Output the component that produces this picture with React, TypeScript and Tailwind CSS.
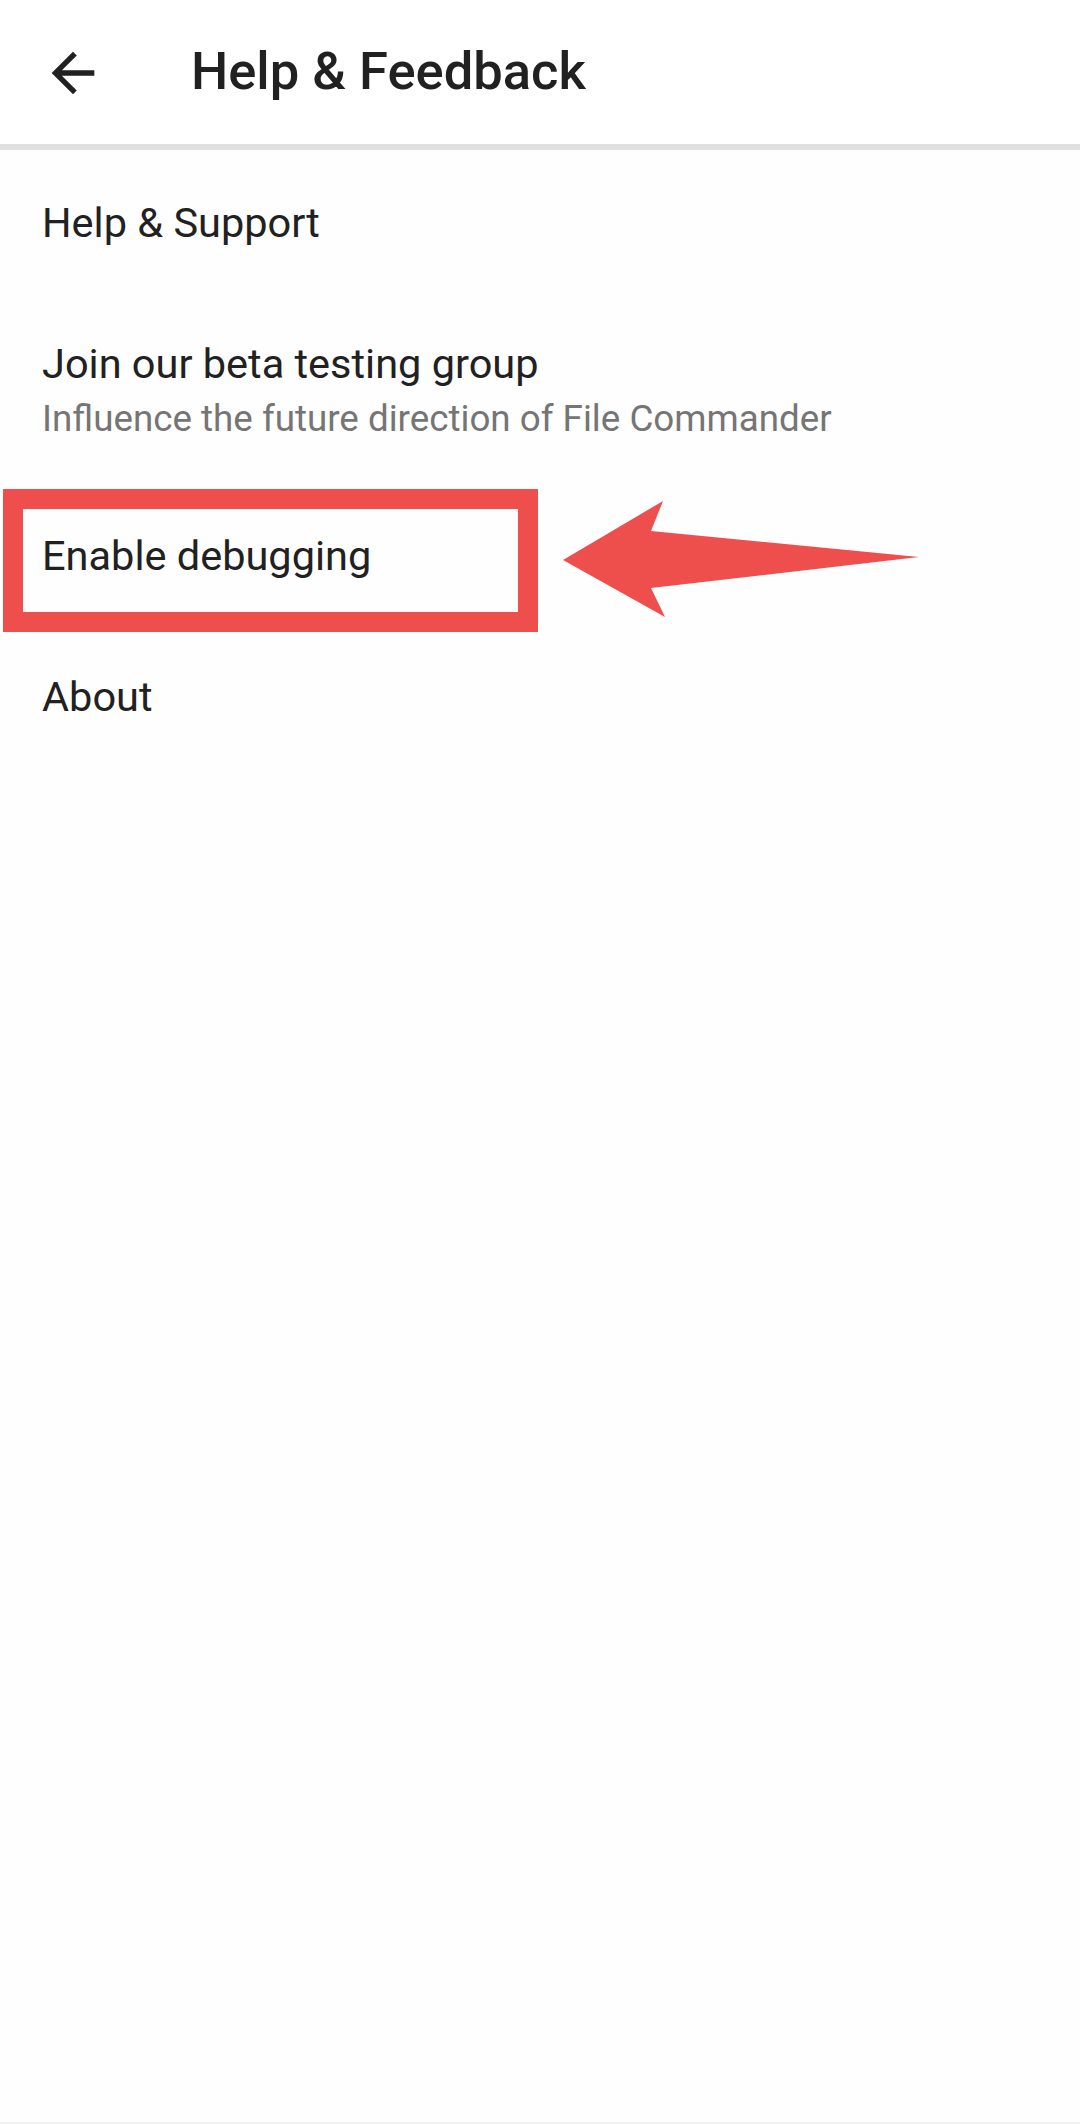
import React from "react";

const font = { fontFamily: "Roboto, 'Noto Sans', sans-serif" };

function BackIcon() {
  return (
    <svg viewBox="0 0 24 24" className="w-[64px] h-[64px]" fill="#212121">
      <path d="M20 11H7.83l5.59-5.59L12 4l-8 8 8 8 1.41-1.41L7.83 13H20v-2z" />
    </svg>
  );
}

interface RowProps {
  title: string;
  subtitle?: string;
}

function Row({ title, subtitle }: RowProps) {
  return (
    <div className="pl-[42px] pr-[42px] pt-[48px] pb-[37px]">
      <div className="text-[41.5px] leading-[56px] text-[#212121]">{title}</div>
      {subtitle && (
        <div className="mt-[3px] text-[36.75px] leading-[48px] text-[#757575]">{subtitle}</div>
      )}
    </div>
  );
}

export default function App() {
  return (
    <div className="relative w-[1080px] h-[2124px] bg-[#fefefe] overflow-hidden" style={font}>
      {/* Toolbar */}
      <div className="h-[144px] bg-white flex items-center">
        <div className="ml-[41px] mt-[1px]">
          <BackIcon />
        </div>
        <div className="ml-[86px] text-[52.5px] font-medium text-[#212121] leading-none mb-[1px]">
          Help &amp; Feedback
        </div>
      </div>
      <div className="h-[6px] bg-[#e0e0e0]" />

      {/* List */}
      <div className="-mt-[3px]">
        <Row title="Help & Support" />
        <Row title="Join our beta testing group" subtitle="Influence the future direction of File Commander" />
        <Row title="Enable debugging" />
        <Row title="About" />
      </div>

      {/* Annotation box */}
      <div className="absolute left-[3px] top-[489px] w-[535px] h-[143px] border-[20px] border-[#ee4f4d]" />

      {/* Annotation arrow */}
      <svg className="absolute left-0 top-0" width="1080" height="700" viewBox="0 0 1080 700">
        <polygon
          points="563,560 663,501 651,531 919,557 651,588 665,617"
          fill="#ee4f4d"
        />
      </svg>

      <div className="absolute left-0 bottom-0 w-full h-[2px] bg-[#f2f2f2]" />
    </div>
  );
}
